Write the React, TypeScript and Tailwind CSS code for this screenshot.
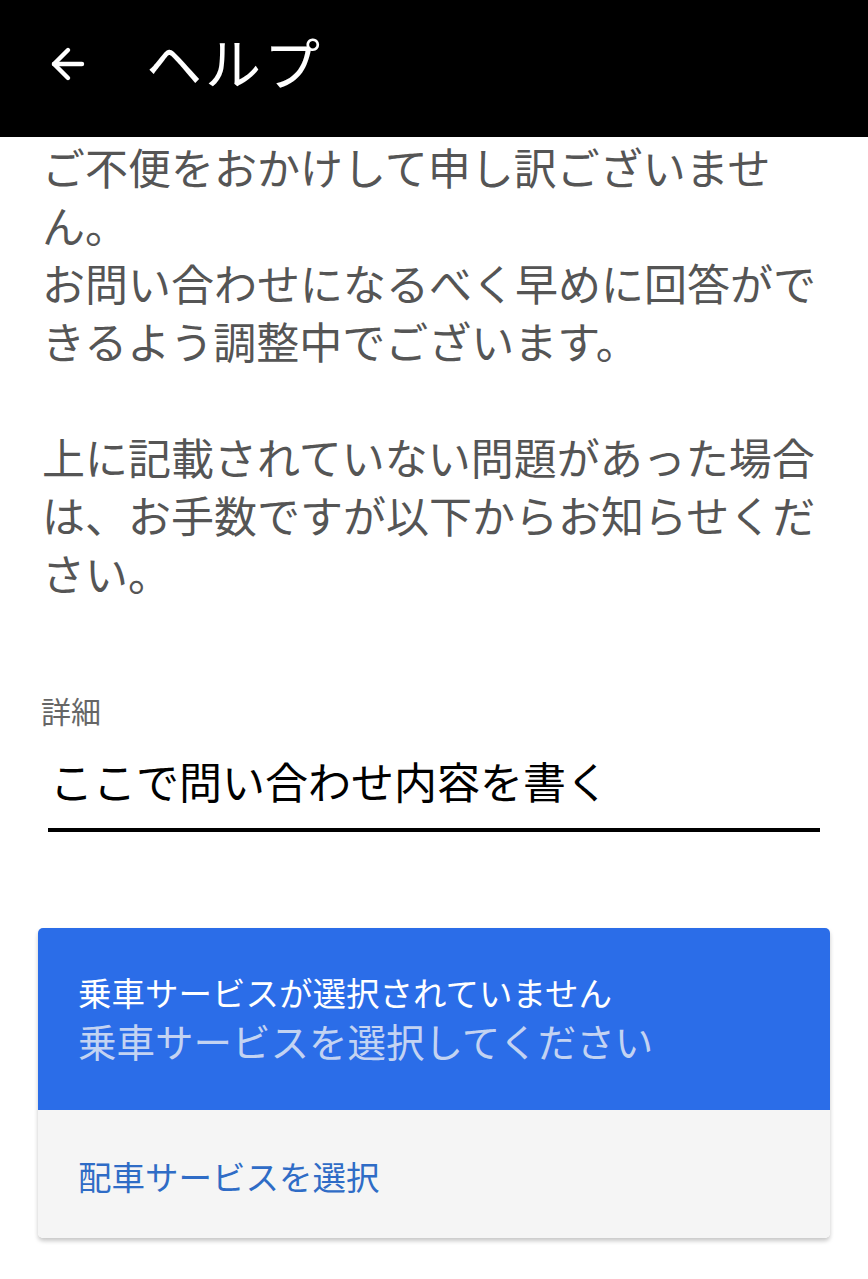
import { ArrowLeft } from "lucide-react";

const font = {
  fontFamily: '"Noto Sans CJK JP", "Noto Sans", sans-serif',
};

export default function App() {
  return (
    <div className="min-h-[1279px] w-full bg-white" style={font}>
      {/* Header */}
      <header className="flex h-[137px] items-center bg-black pb-[16px]">
        <ArrowLeft className="ml-[44px] mt-[6px] h-[48px] w-[48px] text-white" strokeWidth={2.2} />
        <h1 className="ml-[54px] text-[56px] font-normal leading-none tracking-[3px] text-white">ヘルプ</h1>
      </header>

      {/* Message */}
      <div className="pl-[42px] pr-[40px] text-[43px] leading-[58px] text-[#555555]">
        <p>ご不便をおかけして申し訳ございません。</p>
        <p>お問い合わせになるべく早めに回答ができるよう調整中でございます。</p>
        <p className="mt-[58px]">
          上に記載されていない問題があった場合は、お手数ですが以下からお知らせください。
        </p>
      </div>

      {/* Detail field */}
      <div className="mt-[90px] pl-[41px] text-[30px] leading-[38px] text-[#666666]">詳細</div>
      <div className="mx-[48px] mt-[22px] w-[772px] border-b-[4px] border-black pb-[19px]">
        <div className="pl-[2px] text-[43px] leading-[58px] text-black">ここで問い合わせ内容を書く</div>
      </div>

      {/* Service card */}
      <div className="mx-[38px] mt-[96px] w-[792px] overflow-hidden rounded-[5px] shadow-[0_3px_4px_rgba(0,0,0,0.22)]">
        <div className="bg-[#2b6de8] pl-[40px] pt-[41px] pb-[45px]">
          <div className="text-[33.5px] leading-[46px] text-white">乗車サービスが選択されていません</div>
          <div className="text-[38.5px] leading-[50px] text-[#c3d3f2]">乗車サービスを選択してください</div>
        </div>
        <div className="bg-[#f5f5f5] pl-[40px] pt-[43px] pb-[39px]">
          <div className="text-[33.5px] leading-[46px] text-[#2f6cc6]">配車サービスを選択</div>
        </div>
      </div>
    </div>
  );
}
